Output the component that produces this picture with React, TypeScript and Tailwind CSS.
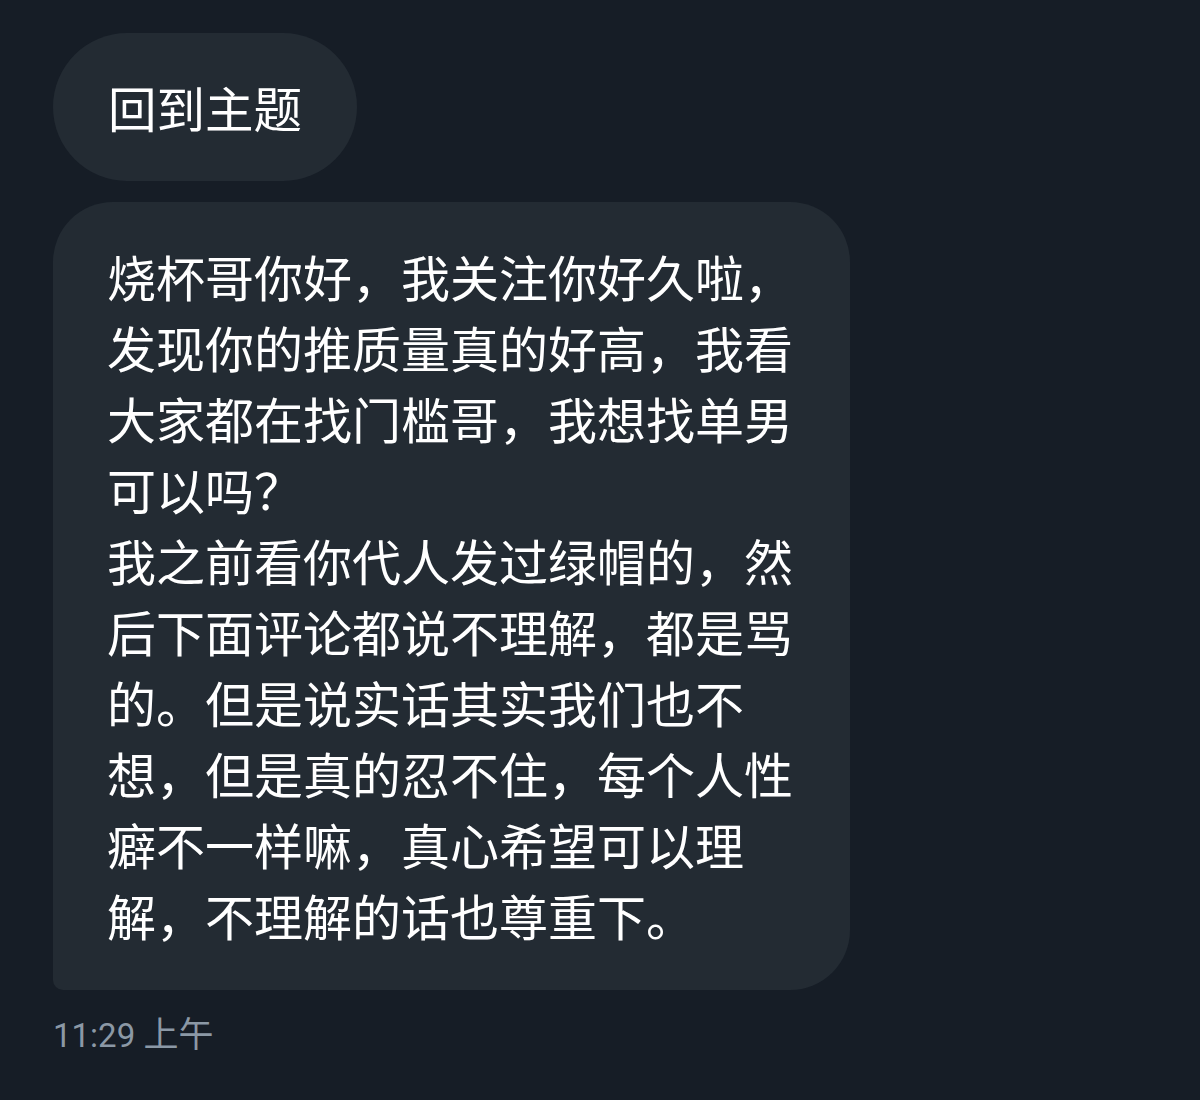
export default function App() {
  const message =
    '烧杯哥你好，我关注你好久啦，发现你的推质量真的好高，我看大家都在找门槛哥，我想找单男可以吗？';
  const message2 =
    '我之前看你代人发过绿帽的，然后下面评论都说不理解，都是骂的。但是说实话其实我们也不想，但是真的忍不住，每个人性癖不一样嘛，真心希望可以理解，不理解的话也尊重下。';

  return (
    <div
      className="w-[1200px] h-[1100px] bg-[#161d26] px-[53px] pt-[33px]"
      style={{ fontFamily: '"Noto Sans CJK SC", "Noto Sans", sans-serif' }}
    >
      <div className="flex flex-col items-start gap-[21px]">
        <div className="h-[148px] rounded-full bg-[#232b33] px-[55px] flex items-center">
          <span className="text-[48.5px] leading-none text-white">回到主题</span>
        </div>

        <div className="w-[797px] bg-[#232b33] rounded-[60px] rounded-bl-[10px] pl-[54px] pr-[53px] pt-[38px] pb-[40px]">
          <div className="w-[690px] text-[49px] leading-[71px] text-white">
            <p>{message}</p>
            <p>{message2}</p>
          </div>
        </div>
      </div>

      <div
        className="mt-[26px] text-[33px] leading-[40px] text-[#8b98a5]"
        style={{ fontFamily: 'Roboto, "Noto Sans CJK SC", sans-serif' }}
      >
        11:29 <span className="text-[35px]">上午</span>
      </div>
    </div>
  );
}
